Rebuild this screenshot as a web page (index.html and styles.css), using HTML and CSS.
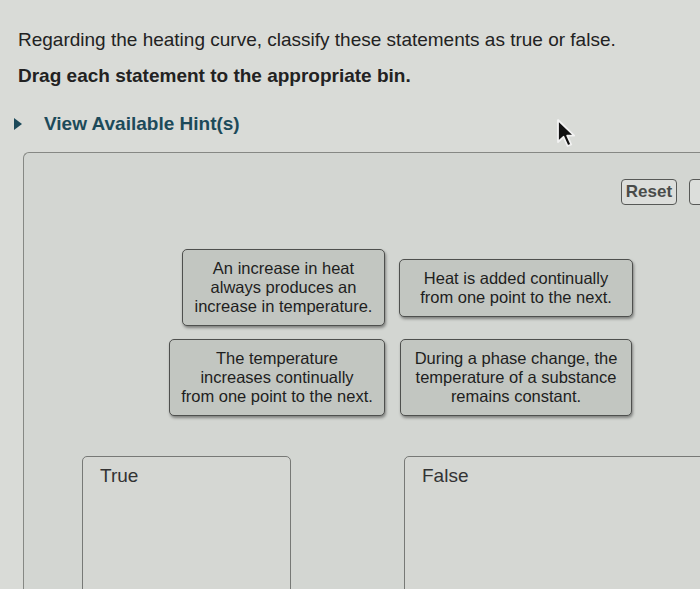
FILE: index.html
```html
<!DOCTYPE html>
<html lang="en">
<head>
<meta charset="utf-8">
<title>Heating curve</title>
<link rel="stylesheet" href="styles.css">
</head>
<body>
<div class="page">
  <p class="question">Regarding the heating curve, classify these statements as true or false.</p>
  <p class="instr">Drag each statement to the appropriate bin.</p>
  <div class="hint"><span class="tri"></span>View Available Hint(s)</div>
  <section class="panel">
    <div class="toolbar">
      <button class="btn">Reset</button>
      <button class="btn" aria-label="Help"></button>
    </div>
    <div class="cards">
      <div class="card c1">An increase in heat<br>always produces an<br>increase in temperature.</div>
      <div class="card c2">Heat is added continually<br>from one point to the next.</div>
      <div class="card c3">The temperature<br>increases continually<br>from one point to the next.</div>
      <div class="card c4">During a phase change, the<br>temperature of a substance<br>remains constant.</div>
    </div>
    <div class="bins">
      <div class="bin"><span class="bin-label">True</span></div>
      <div class="bin"><span class="bin-label">False</span></div>
    </div>
  </section>
  <svg class="cursor" width="22" height="32" viewBox="0 0 22 32">
    <path d="M2 2 L2 24 L7.5 18.8 L11.6 28 L15.2 26.5 L11.2 17.6 L18.2 17.6 Z" fill="#111" stroke="#f2f2f2" stroke-width="1.8" stroke-linejoin="round"/>
  </svg>
</div>
</body>
</html>
```
FILE: styles.css
```css
html, body {
  margin: 0;
  padding: 0;
}
body {
  width: 700px;
  height: 589px;
  overflow: hidden;
  background: #d9dbd7;
  font-family: "Liberation Sans", Arial, Helvetica, sans-serif;
  color: #222;
}
.page {
  position: relative;
  padding-top: 29px;
}
.question {
  margin: 0 0 0 18px;
  font-size: 19px;
  line-height: 22px;
}
.instr {
  margin: 14px 0 0 18px;
  font-size: 19px;
  line-height: 22px;
  font-weight: bold;
}
.hint {
  display: flex;
  align-items: center;
  margin-top: 26px;
  padding-left: 14px;
  height: 22px;
  font-size: 19px;
  font-weight: bold;
  color: #1c4a5a;
}
.tri {
  width: 0;
  height: 0;
  border-left: 8px solid #1c4a5a;
  border-top: 6px solid transparent;
  border-bottom: 6px solid transparent;
  margin-right: 22px;
}
.panel {
  margin: 17px 0 0 23px;
  width: 900px;
  height: 460px;
  border-top: 1.5px solid #868884;
  border-left: 1.5px solid #868884;
  border-top-left-radius: 6px;
  background: #d3d6d2;
}
.toolbar {
  display: flex;
  gap: 12px;
  padding: 26px 0 0 597px;
}
.btn {
  box-sizing: border-box;
  width: 56px;
  height: 26px;
  padding: 0;
  border: 1.5px solid #575957;
  border-radius: 4px;
  background: #dcdedb;
  font-family: "Liberation Sans", Arial, sans-serif;
  font-size: 17px;
  font-weight: bold;
  color: #4a4c4a;
}
.cards {
  display: grid;
  grid-template-columns: 361px 240px;
  column-gap: 14px;
  row-gap: 13px;
  align-items: center;
  margin-top: 44px;
}
.card {
  box-sizing: border-box;
  padding: 9px 4px;
  border: 1.5px solid #4e504e;
  border-radius: 5px;
  background: #c2c6c1;
  box-shadow: 1px 2px 3px rgba(0, 0, 0, 0.4);
  font-size: 16.5px;
  line-height: 19px;
  text-align: center;
  color: #1e1e1e;
}
.c1 { width: 203px; justify-self: end; }
.c2 { width: 234px; justify-self: start; }
.c3 { width: 216px; justify-self: end; }
.c4 { width: 232px; justify-self: start; margin-left: 1px; }
.bins {
  display: grid;
  grid-template-columns: 209px 400px;
  column-gap: 113px;
  margin-top: 40px;
  padding-left: 58px;
}
.bin {
  box-sizing: border-box;
  height: 160px;
  border: 1.5px solid #777976;
  border-radius: 5px;
  background: #d5d7d3;
  padding: 8px 0 0 17px;
}
.bin-label {
  font-size: 19px;
  line-height: 22px;
  color: #333;
}
.cursor {
  position: absolute;
  left: 556px;
  top: 118px;
}
```
